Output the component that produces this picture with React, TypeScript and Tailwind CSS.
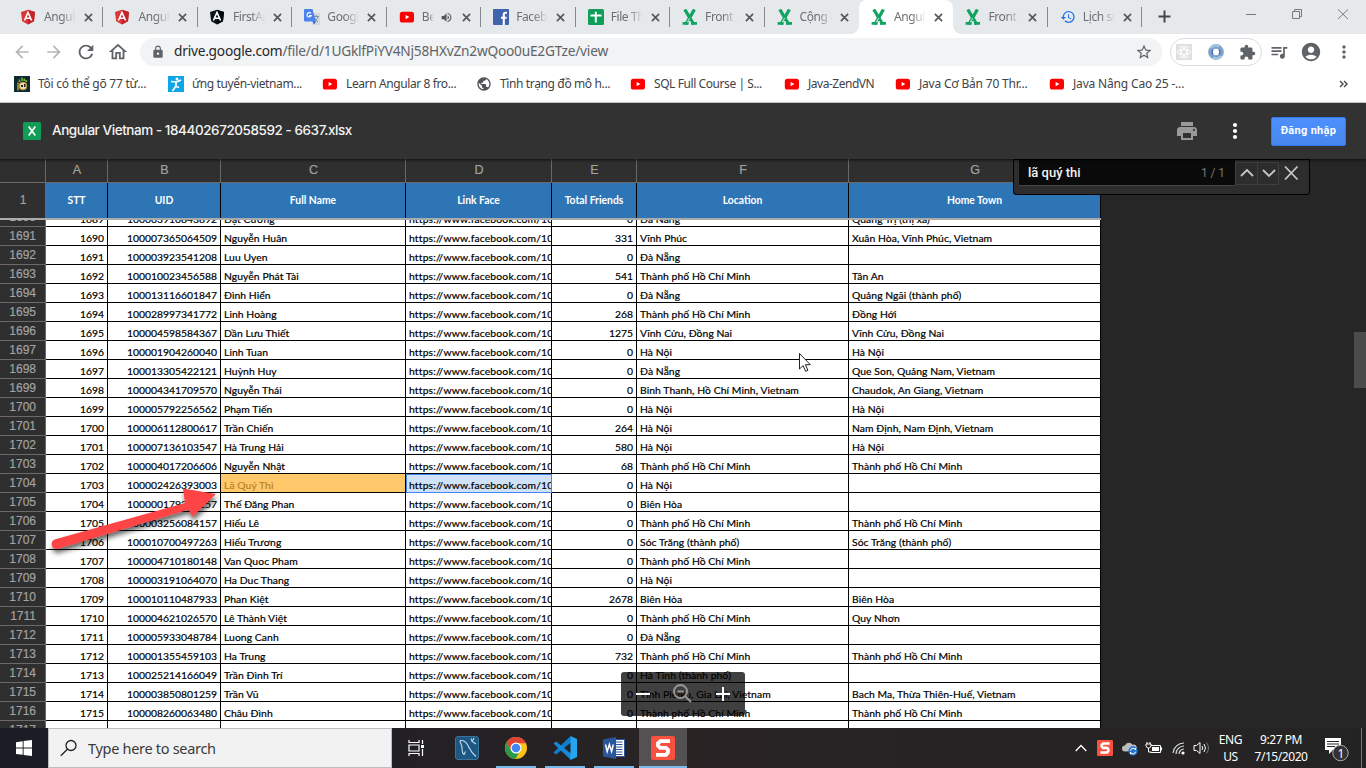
import React from "react";
import {
  MdArrowBack, MdArrowForward, MdRefresh, MdOutlineHome, MdLock, MdStarBorder, MdExtension,
  MdQueueMusic, MdAccountCircle, MdMoreVert, MdPrint, MdVolumeUp, MdHistory, MdPublic,
} from "react-icons/md";

const Angular = ({ dark }: { dark?: boolean }) => (
  <svg width="16" height="16" viewBox="0 0 16 16">
    <path d="M7 .8 14 3l-1 9.200L7 15.600 1.200 12.200 0 3z" fill={dark ? "#0c131b" : "#dd3436"} />
    <path d="M7 .8 14 3l-1 9.200L7 15.600z" fill={dark ? "#02070d" : "#c3232b"} />
    <path d="M3.400 11.500 7 3.400l3.600 8.100M5 9.200h4" fill="none" stroke="#fff" strokeWidth="1.600" />
  </svg>
);
const YouTube = () => (
  <svg width="16" height="16" viewBox="0 0 16 16">
    <rect x=".8" y="2.800" width="14.200" height="10.700" rx="2.600" fill="#f00" />
    <path d="M6.600 5.900v4.400l3.800-2.200z" fill="#fff" />
  </svg>
);
const Translate = () => (
  <svg width="16" height="16" viewBox="0 0 16 16">
    <path d="M6 4h10v12H9z" fill="#d5d8dc" />
    <path d="M9 7.500h6M12 6v1.500M13.800 8c-.5 2-2 3.500-3.500 4.500M10.500 9c1 2 2 3 3.500 3.800" stroke="#7c93a8" fill="none" />
    <path d="M1 0h7.500l3.500 12.500H1a1 1 0 0 1-1-1V1a1 1 0 0 1 1-1z" fill="#4a83ee" />
    <path d="M7 4.500A2.200 2.200 0 1 0 7.300 6.500H5" stroke="#fff" fill="none" strokeWidth="1.100" />
    <path d="M8.500 12.500H12L10 15.500z" fill="#2d5ec4" />
  </svg>
);
const Facebook = () => (
  <svg width="16" height="16" viewBox="0 0 16 16">
    <rect width="16" height="16" rx="1" fill="#4063b0" />
    <path d="M14 3.800h-1.500c-1.400 0-1.700.8-1.700 1.800V16M8 8.800h5.600" stroke="#fff" strokeWidth="2.100" fill="none" />
  </svg>
);
const SheetPlus = () => (
  <svg width="16" height="16" viewBox="0 0 16 16">
    <rect width="16" height="16" rx="1.500" fill="#0f9d58" />
    <path d="M2.500 6.500h11M7.800 2.800v10.700" stroke="#fff" strokeWidth="1.900" />
  </svg>
);
const ExcelX = () => (
  <svg width="16" height="16" viewBox="0 0 16 16">
    <path d="M2.800.5 11.800 15.500M12.400.5 3.800 15.500" stroke="#14a462" strokeWidth="3.300" fill="none" />
    <path d="M.6 14.400h6M9 14.400h6" stroke="#14a462" strokeWidth="2.800" />
    <path d="M7.600 9.200 5.500 12.800h3.500" stroke="#e5f4ec" strokeWidth=".9" fill="none" />
  </svg>
);
const Cross = () => (
  <svg className="shrink-0" width="9" height="9" viewBox="0 0 9 9"><path d="m.9.9 7.200 7.200M8.100.9.9 8.100" stroke="#55585c" strokeWidth="1.700" /></svg>
);

const tabs: { icon: React.ReactNode; label: string; active?: boolean; sound?: boolean }[] = [
  { icon: <Angular />, label: "Angular" },
  { icon: <Angular />, label: "Angular" },
  { icon: <Angular dark />, label: "FirstApp" },
  { icon: <Translate />, label: "Google" },
  { icon: <YouTube />, label: "Beat", sound: true },
  { icon: <Facebook />, label: "Facebook" },
  { icon: <SheetPlus />, label: "File Thu" },
  { icon: <ExcelX />, label: "Front e" },
  { icon: <ExcelX />, label: "Cộng đ" },
  { icon: <ExcelX />, label: "Angular", active: true },
  { icon: <ExcelX />, label: "Front e" },
  { icon: <MdHistory className="size-4 text-[#1a73e8]" />, label: "Lịch sử" },
];

function TabStrip() {
  return (
    <div className="flex h-[34px] bg-[#e5e9ec] pl-[9px] text-[#6b6e72]">
      {tabs.map((t, i) => (
        <div key={i} className={"relative flex h-[34px] w-[94.450px] shrink-0 items-center pl-[12px] " + (t.active ? "rounded-t-[8px] bg-white" : "")}>
          {t.active && (
            <>
              <span className="absolute bottom-0 -left-2 size-2 bg-[radial-gradient(circle_at_0_0,transparent_7.5px,white_8px)]" />
              <span className="absolute -right-2 bottom-0 size-2 bg-[radial-gradient(circle_at_100%_0,transparent_7.5px,white_8px)]" />
            </>
          )}
          <span className="flex size-4 shrink-0">{t.icon}</span>
          <span className={"ml-[7px] overflow-hidden text-[12px] leading-4 tracking-[-0.4px] whitespace-nowrap [mask-image:linear-gradient(to_right,#000_55%,transparent)] " + (t.sound ? "w-[12px]" : "w-[32px]")}>{t.label}</span>
          {t.sound && <MdVolumeUp className="ml-[6px] size-[13px] shrink-0 text-[#555]" />}
          <span className={"flex " + (t.sound ? "ml-[9px]" : "ml-[8px]")}><Cross /></span>
          {!t.active && i !== 8 && <span className="absolute top-[7px] right-0 h-5 w-px bg-[#85888c]" />}
        </div>
      ))}
      <svg className="mt-[10px] ml-[16px]" width="13" height="13" viewBox="0 0 13 13"><path d="M6.500.5v12M.5 6.500h12" stroke="#45484c" strokeWidth="2" /></svg>
      <svg className="ml-auto" width="130" height="34" viewBox="0 0 130 34" fill="none" stroke="#777a7d">
        <path d="M10 14.500h10M56.500 11.500h7v7h-7zM58.500 11V9.500h7v7H64M102 9.500l10 9.500M112 9.500 102 19" />
      </svg>
    </div>
  );
}

function Toolbar() {
  return (
    <div className="flex h-[36px] items-center bg-white text-[#5f6368]">
      <MdArrowBack className="ml-[12px] size-5 text-[#b4b6b8]" />
      <MdArrowForward className="ml-[12px] size-5 text-[#b4b6b8]" />
      <MdRefresh className="ml-[11px] size-[22px]" />
      <MdOutlineHome className="ml-[10px] size-[22px]" />
      <div className="ml-[11px] flex h-[28px] w-[1022px] items-center rounded-full bg-[#f1f3f4]">
        <MdLock className="ml-[11px] size-[14px]" />
        <span className="-mt-px ml-[9px] text-[13.700px] tracking-[-0.22px] whitespace-nowrap"><span className="text-[#25272a]">drive.google.com</span>/file/d/1UGklfPiYV4Nj58HXvZn2wQoo0uE2GTze/view</span>
        <MdStarBorder className="mr-[9px] ml-auto size-[18px]" />
      </div>
      <div className="ml-[8px] flex h-[28px] w-[92px] items-center rounded-full border border-[#dadce0]">
        <svg className="ml-[5px]" width="16" height="16" viewBox="0 0 16 16" fill="none" stroke="#fff">
          <path d="M0 0h16v16H0z" fill="#dfdfdf" stroke="none" />
          <ellipse cx="8" cy="8" rx="6.500" ry="2.500" /><ellipse cx="8" cy="8" rx="6.500" ry="2.500" transform="rotate(60 8 8)" /><ellipse cx="8" cy="8" rx="6.500" ry="2.500" transform="rotate(120 8 8)" />
        </svg>
        <svg className="ml-[16px]" width="16" height="16" viewBox="0 0 16 16" fill="none">
          <circle cx="8" cy="8" r="5.600" stroke="#7da2cc" strokeWidth="4.600" />
          <path d="M3 4a6 6 0 0 1 8-1.500M13 12a6 6 0 0 1-8 1.500" stroke="#b4cbe4" strokeWidth="2" />
          <path d="M11 5.500a4 4 0 0 1 0 5M5 10.500a4 4 0 0 1 0-5" stroke="#426fa8" strokeWidth="1.200" />
        </svg>
        <MdExtension className="ml-[15px] size-[17px]" />
      </div>
      <MdQueueMusic className="ml-[7px] size-[20px]" />
      <MdAccountCircle className="ml-[11px] size-[22px]" />
      <MdMoreVert className="ml-[12px] size-[20px]" />
    </div>
  );
}

const BirdMark = () => (
  <svg width="16" height="16" viewBox="0 0 16 16">
    <path d="M0 0h16v16H0z" fill="#0e2932" />
    <path d="M5.500 6V3.500M8 5V1.500M10.300 5V2.500M12.300 6V4" stroke="#7fb52f" strokeWidth="1.600" />
    <circle cx="9" cy="10" r="3.900" fill="#eadbb0" stroke="#ba8b27" />
    <path d="M7 9h2v2H7zM10 8h1.500v3H10z" fill="#222" /><path d="M4 6.500v8" stroke="#c19736" strokeWidth="1.500" />
  </svg>
);
const RunnerMark = () => (
  <svg width="16" height="16" viewBox="0 0 16 16">
    <path d="M0 0h16v16H0z" fill="#0ea5e9" />
    <circle cx="9" cy="3" r="1.500" fill="#fff" />
    <path d="M3 5.500 8.500 6l4.500-2M8 6v4.500l3 1M8 10l-3.500 5" stroke="#fff" strokeWidth="1.700" fill="none" />
  </svg>
);

const bookmarks: [React.ReactNode, string, string][] = [
  [<BirdMark />, "Tôi có thể gõ 77 từ...", "w-[154px] tracking-[-0.25px]"],
  [<RunnerMark />, "ứng tuyển-vietnam...", "w-[154px] tracking-[-0.37px]"],
  [<YouTube />, "Learn Angular 8 fro...", "w-[154px] tracking-[-0.39px]"],
  [<MdPublic className="size-4 text-[#505357]" />, "Tình trạng đồ mô h...", "w-[154px] tracking-[-0.37px]"],
  [<YouTube />, "SQL Full Course | S...", "w-[154px] tracking-[-0.42px]"],
  [<YouTube />, "Java-ZendVN", "w-[111px] tracking-[-0.48px]"],
  [<YouTube />, "Java Cơ Bản 70 Thr...", "w-[154px] tracking-[-0.2px]"],
  [<YouTube />, "Java Nâng Cao 25 -...", "w-[154px] tracking-[-0.17px]"],
];

function Bookmarks() {
  return (
    <div className="flex h-[33px] items-center border-b border-[#dadce0] bg-white pb-[5px] pl-[14px] text-[12px] text-[#3f4246]">
      {bookmarks.map(([icon, label, w]) => (
        <div key={label} className={"flex shrink-0 items-center " + w}>
          <span className="flex size-4">{icon}</span>
          <span className="ml-[8px] whitespace-nowrap">{label}</span>
        </div>
      ))}
      <svg className="mr-[18px] ml-auto" width="9" height="8" viewBox="0 0 9 8" fill="none" stroke="#45484c" strokeWidth="1.400"><path d="M1 1l3 3-3 3M5 1l3 3-3 3" /></svg>
    </div>
  );
}

function FileHeader() {
  return (
    <div className="relative z-20 flex h-[56px] items-center bg-[#323232] pl-[23px] shadow-[0_1px_3px_rgba(0,0,0,0.7)]">
      <svg width="18" height="18" viewBox="0 0 18 18"><rect width="18" height="18" rx="1.500" fill="#0f9d58" /><path d="m5.700 4.500 6.600 9M12.300 4.500l-6.600 9" stroke="#fff" strokeWidth="1.700" /></svg>
      <span className="-mt-[2px] ml-[11px] font-[Inter] text-[13.500px] font-medium tracking-[-0.44px] whitespace-nowrap text-[#f4f4f4]">Angular Vietnam - 184402672058592 - 6637.xlsx</span>
      <MdPrint className="ml-auto size-[24px] text-[#999]" />
      <svg className="ml-[33px]" width="6" height="18" viewBox="0 0 6 18" fill="#fff"><circle cx="3" cy="3" r="2.100" /><circle cx="3" cy="9" r="2.100" /><circle cx="3" cy="15" r="2.100" /></svg>
      <button className="mr-[20px] ml-[33px] h-[29px] w-[75px] rounded-[2px] border border-[#3079ed] bg-gradient-to-b from-[#4d90fe] to-[#4787ed] pt-px font-[Roboto] text-[11px] font-bold tracking-[0.3px] whitespace-nowrap text-white">Đăng nhập</button>
    </div>
  );
}

type Row = [number, string, string, number, string, string];
const rows: Row[] = [
  [1689, "100003910843892", "Đạt Cường", 0, "Đà Nẵng", "Quảng Trị (thị xã)"],
  [1690, "100007365064509", "Nguyễn Huân", 331, "Vĩnh Phúc", "Xuân Hòa, Vĩnh Phúc, Vietnam"],
  [1691, "100003923541208", "Luu Uyen", 0, "Đà Nẵng", ""],
  [1692, "100010023456588", "Nguyễn Phát Tài", 541, "Thành phố Hồ Chí Minh", "Tân An"],
  [1693, "100013116601847", "Đình Hiển", 0, "Đà Nẵng", "Quảng Ngãi (thành phố)"],
  [1694, "100028997341772", "Linh Hoàng", 268, "Thành phố Hồ Chí Minh", "Đồng Hới"],
  [1695, "100004598584367", "Dần Lưu Thiết", 1275, "Vĩnh Cửu, Đồng Nai", "Vĩnh Cửu, Đồng Nai"],
  [1696, "100001904260040", "Linh Tuan", 0, "Hà Nội", "Hà Nội"],
  [1697, "100013305422121", "Huỳnh Huy", 0, "Đà Nẵng", "Que Son, Quảng Nam, Vietnam"],
  [1698, "100004341709570", "Nguyễn Thái", 0, "Binh Thanh, Hồ Chí Minh, Vietnam", "Chaudok, An Giang, Vietnam"],
  [1699, "100005792256562", "Phạm Tiến", 0, "Hà Nội", "Hà Nội"],
  [1700, "100006112800617", "Trần Chiến", 264, "Hà Nội", "Nam Định, Nam Định, Vietnam"],
  [1701, "100007136103547", "Hà Trung Hải", 580, "Hà Nội", "Hà Nội"],
  [1702, "100004017206606", "Nguyễn Nhật", 68, "Thành phố Hồ Chí Minh", "Thành phố Hồ Chí Minh"],
  [1703, "100002426393003", "Lã Quý Thi", 0, "Hà Nội", ""],
  [1704, "100000179284157", "Thế Đăng Phan", 0, "Biên Hòa", ""],
  [1705, "100003256084157", "Hiếu Lê", 0, "Thành phố Hồ Chí Minh", "Thành phố Hồ Chí Minh"],
  [1706, "100010700497263", "Hiếu Trương", 0, "Sóc Trăng (thành phố)", "Sóc Trăng (thành phố)"],
  [1707, "100004710180148", "Van Quoc Pham", 0, "Thành phố Hồ Chí Minh", ""],
  [1708, "100003191064070", "Ha Duc Thang", 0, "Hà Nội", ""],
  [1709, "100010110487933", "Phan Kiệt", 2678, "Biên Hòa", "Biên Hòa"],
  [1710, "100004621026570", "Lê Thành Việt", 0, "Thành phố Hồ Chí Minh", "Quy Nhơn"],
  [1711, "100005933048784", "Luong Canh", 0, "Đà Nẵng", ""],
  [1712, "100001355459103", "Ha Trung", 732, "Thành phố Hồ Chí Minh", "Thành phố Hồ Chí Minh"],
  [1713, "100025214166049", "Trần Đình Trí", 0, "Hà Tĩnh (thành phố)", ""],
  [1714, "100003850801259", "Trần Vũ", 0, "Tỉnh Pleiku, Gia Lai, Vietnam", "Bach Ma, Thừa Thiên-Huế, Vietnam"],
  [1715, "100008260063480", "Châu Đình", 0, "Thành phố Hồ Chí Minh", "Thành phố Hồ Chí Minh"],
  [1716, "100004937116205", "Minh Anh", 0, "Hà Nội", "Hà Nội"],
];

const grid = "grid grid-cols-[46px_62px_113px_185px_146px_85px_212px_252px] w-[1101px]";
const cell = "overflow-hidden border-r border-b border-black whitespace-nowrap leading-[14px] pt-[4px] [-webkit-text-stroke:0.2px] ";
const num = " text-right pr-[3px]";
const txt = " pl-[3px] tracking-[0.07px]";

function SheetRow({ r }: { r: Row }) {
  const hit = r[0] === 1703;
  return (
    <div className={grid + " h-[19px] shrink-0 bg-white text-[10.350px] text-black"}>
      <div className="overflow-hidden border-r border-b border-[#6a6a6a] bg-[#2f2f2f] pr-[9px] text-right font-['Liberation_Sans'] text-[12px] leading-[18px] text-[#a2a2a2] [-webkit-text-stroke:0.2px]">{r[0] + 1}</div>
      <div className={cell + num}>{r[0]}</div>
      <div className={cell + num}>{r[1]}</div>
      <div className={cell + txt + (hit ? " bg-[#ffc96b] text-[#b98228]" : "")}>{r[2]}</div>
      <div className={cell + " pl-[3px] tracking-[0.17px] " + (hit ? " !border-[#4285f4] bg-[#d0e2f8] shadow-[inset_1px_1px_0_#4285f4]" : "")}>https://www.facebook.com/{r[1]}</div>
      <div className={cell + num}>{r[3]}</div>
      <div className={cell + txt}>{r[4]}</div>
      <div className={cell + txt}>{r[5]}</div>
    </div>
  );
}

function Sheet() {
  return (
    <div className="relative flex h-[569px] flex-col overflow-hidden bg-[#262626] font-[Lato,'Noto_Sans',sans-serif]">
      <div className={grid + " h-[24px] shrink-0 bg-[#2f2f2f] text-center font-['Liberation_Sans'] text-[12.500px] leading-[22px] text-[#a2a2a2] [-webkit-text-stroke:0.2px]"}>
        {["", "A", "B", "C", "D", "E", "F", "G"].map((h) => <div key={h} className="border-r border-b border-[#6a6a6a] pl-px">{h}</div>)}
      </div>
      <div className={grid + " h-[35px] shrink-0 bg-[#2e75b6] text-center text-[10.350px] leading-[35px] font-bold text-white"}>
        <div className="border-r border-[#6a6a6a] bg-[#2f2f2f] pl-px font-['Liberation_Sans'] text-[12px] font-normal text-[#a2a2a2] [-webkit-text-stroke:0.2px]">1</div>
        {["STT", "UID", "Full Name", "Link Face", "Total Friends", "Location", "Home Town"].map((h) => <div key={h} className="border-r border-black">{h}</div>)}
      </div>
      <div className="h-[2px] w-[1101px] shrink-0 bg-[#ababab]" />
      <div className="flex h-[508px] flex-col justify-start overflow-hidden">
        <div className="-mt-[12px] flex flex-col">{rows.map((r) => <SheetRow key={r[0]} r={r} />)}</div>
      </div>

      <div className="absolute top-0 left-[1013px] flex h-[36px] w-[297px] rounded-b-[3px] border border-black bg-[#2d2d2d] pl-[5px] font-[Roboto] text-[#f2f2f2]">
        <div className="flex h-[26px] w-[216px] items-center border-b border-[#454545] bg-[#0a0a0a] pr-[10px] pl-[9px]">
          <span className="text-[13px] font-medium">lã quý thi</span>
          <span className="ml-auto text-[12px] tracking-[-0.1px] text-[#777]">1 / 1</span>
        </div>
        <svg width="70" height="28" viewBox="0 0 70 28" fill="none" stroke="#404040">
          <path d="M.5 2.500h43v22H.5zM22.500 2.500v22" />
          <path d="m6 16 6-6 6 6M28 10l6 6 6-6M50 6.500l12.500 13M62.500 6.500 50 19.500" stroke="#c8c8c8" strokeWidth="1.800" />
        </svg>
      </div>
      <div className="absolute top-[173px] right-0 h-[56px] w-[12px] bg-[#4b4b4b]" />

      <svg className="absolute top-[316px] left-[40px]" width="190" height="90" viewBox="0 0 190 90">
        <defs><filter id="soft" x="-10%" y="-20%" width="120%" height="150%"><feDropShadow dx="1" dy="4" stdDeviation="2.500" floodColor="#000" floodOpacity=".6" /></filter></defs>
        <path d="M14.500 64.500 145 28 143 13.500 176 19 152 42 149 34.500 17 74A5 5 0 0 1 14.500 64.500z" fill="#fd4444" filter="url(#soft)" />
      </svg>
      <svg className="absolute top-[194px] left-[799px]" width="13" height="20" viewBox="0 0 13 20">
        <path d="M.5.5v15.500l3.600-3.400 2.500 5.700 2.300-1-2.500-5.600h4.900z" fill="#fff" stroke="#222" />
      </svg>
      <div className="absolute top-[513px] left-[621px] h-[44px] w-[124px] rounded-[3px] bg-black/75">
        <svg width="124" height="43" viewBox="0 0 124 43" fill="none" stroke="#fff" strokeWidth="2">
          <path d="M15 22h14M95 22h14M102 15v14" />
          <g stroke="#969696"><circle cx="59.500" cy="19.500" r="6.500" /><path d="m64 24 6 6M56.500 19.500h6" /></g>
        </svg>
      </div>
    </div>
  );
}

const SnagMark = () => (
  <svg className="size-full" viewBox="0 0 24 24"><rect width="24" height="24" rx="2" fill="#f9513f" /><path d="M19 5.200H9.500L7 7.200v2.600L9 11.800h6l2 2v2.800l-2 2.200H5" fill="none" stroke="#fff" strokeWidth="3.800" /></svg>
);

const apps: { icon: React.ReactNode; running?: boolean; active?: boolean }[] = [
  { icon: <svg width="24" height="24" viewBox="0 0 24 24"><rect x=".5" y=".5" width="23" height="23" rx="2.500" fill="#1d5783" stroke="#3a759e" /><path d="M5 4.500c4-.5 6 1 8 5s3 7 8 11M5 4.500c0 3 2 4 2 7s0 6 2 7l1.500-3M16 2.500l1 3 4 2.500M19 2l-1.500 3" fill="none" stroke="#c6dceb" strokeWidth="1.100" /></svg> },
  { icon: <svg width="24" height="24" viewBox="0 0 24 24"><circle cx="12" cy="12" r="11" fill="#fbc116" /><path d="M2.500 6.500A11 11 0 0 1 22 7.200H12l-5 7.300z" fill="#de4436" /><path d="M2.500 6.500A11 11 0 0 0 11.500 23l4.500-8.500L7 14.500z" fill="#279b4c" /><circle cx="12" cy="12" r="5.500" fill="#fff" /><circle cx="12" cy="12" r="4.300" fill="#4285f4" /></svg>, running: true },
  { icon: <svg width="24" height="24" viewBox="0 0 24 24"><path d="M18 6.500 3 18.500.5 16.500 17.500 0z" fill="#0a7fce" /><path d="M.5 7.500 3 5.500l15 12V24z" fill="#148bd8" /><path d="M17.500 0 24 3v18l-6.500 3z" fill="#25a5ef" /></svg>, running: true },
  { icon: <svg width="24" height="24" viewBox="0 0 24 24"><path d="M13 3.500h9.500v17H13z" fill="#fff" stroke="#2b579a" /><path d="M14 6h6.500M14 8.500h6.500M14 11h6.500M14 13.500h6.500M14 16h6.500M14 18.500h6.500" stroke="#2b579a" /><path d="M1 3.500 14 1v22L1 20.500z" fill="#2b579a" /><path d="m3.500 8.500 1.700 7 2.200-7 2.200 7 1.700-7" fill="none" stroke="#fff" strokeWidth="1.500" /></svg>, running: true },
  { icon: <span className="size-6"><SnagMark /></span>, running: true, active: true },
];

function Taskbar() {
  return (
    <div className="flex h-[40px] bg-gradient-to-r from-[#1a1d24] via-[#292324] to-[#242324] text-white">
      <div className="flex w-[48px] items-center justify-center">
        <svg width="16" height="16" viewBox="0 0 16 16" fill="#fff"><path d="M0 2.200 6.700 1.300v6.300H0zM7.600 1.100 16 0v7.600H7.600zM0 8.500h6.700v6.300L0 13.900zM7.600 8.500H16V16l-8.400-1.100z" /></svg>
      </div>
      <div className="flex w-[344px] items-center border border-[#bdbdbd] bg-[#f2f2f2] pl-[11px]">
        <svg width="18" height="18" viewBox="0 0 18 18" fill="none" stroke="#222" strokeWidth="1.300"><circle cx="11" cy="6.500" r="5" /><path d="M7.400 10.200.8 16.800" /></svg>
        <span className="mt-[2px] ml-[10px] text-[14.500px] tracking-[-0.3px] text-[#3a3a3a]">Type here to search</span>
      </div>
      <div className="flex w-[48px] items-center justify-center">
        <svg width="17" height="16" viewBox="0 0 17 16" fill="none" stroke="#fff" strokeWidth="1.200"><path d="M1 0v2.500h10V0M1 16v-2.500h10V16M1 5h10v6H1zM14.500 0v4M14.500 9v7" /><path d="M13 5h3v3h-3z" fill="#fff" stroke="none" /></svg>
      </div>
      <div className="flex gap-px pl-[3px]">
        {apps.map((a, i) => (
          <div key={i} className={"relative flex w-[48px] items-center justify-center " + (a.active ? "bg-[#555152]" : "")}>
            {a.icon}
            {a.running && <span className={"absolute bottom-0 h-[2px] bg-[#76b9ed] " + (a.active ? "inset-x-0" : "inset-x-[4px]")} />}
          </div>
        ))}
      </div>
      <div className="ml-auto flex items-center">
        <svg width="12" height="8" viewBox="0 0 12 8" fill="none" stroke="#fff" strokeWidth="1.300"><path d="m.7 7 5.300-5.500L11.300 7" /></svg>
        <span className="ml-[10px] size-4"><SnagMark /></span>
        <svg className="ml-[8px]" width="17" height="16" viewBox="0 0 17 16"><path d="M4 11.500a3 3 0 0 1 0-6 4.200 4.200 0 0 1 7.500-.8A3.400 3.400 0 0 1 14 11z" fill="#bcbcbc" /><circle cx="12" cy="11" r="4.700" fill="#2376cf" /><path d="M9.500 10.500a2.600 2.600 0 0 1 5-.5V8M14.600 11.700a2.600 2.600 0 0 1-5 .5v2" stroke="#fff" fill="none" /></svg>
        <svg className="ml-[7px]" width="17" height="14" viewBox="0 0 17 14" fill="none" stroke="#fff"><path d="M6 4.500h9.500v7h-10M15.500 6.500h1v3M1 3h5v2L4.500 7h-2L1 5zM2 1v2M5 1v2M3.500 7v4h3" /><path d="M7 6h7v4H7z" fill="#fff" stroke="none" /></svg>
        <svg className="ml-[10px]" width="13" height="14" viewBox="0 0 13 14" fill="none" stroke="#ddd" strokeWidth="1.200"><path d="M1 12A11 11 0 0 1 12 2M4 13a8 8 0 0 1 8-8M7 13a5 5 0 0 1 5-5" /><circle cx="11" cy="12" r="1.600" fill="#fff" stroke="none" /></svg>
        <svg className="ml-[8px]" width="17" height="16" viewBox="0 0 17 16" fill="none" stroke="#fff"><path d="M1 5.500h2.500L7 2.500v11l-3.500-3H1zM9 6q1.500 2 0 4M11 4q3 4 0 8" /><path d="M13.500 2.500q4 5.500 0 11" stroke="#777" /></svg>
        <div className="ml-[8px] w-[25px] text-center text-[12px] leading-[17px] tracking-[-0.35px]">ENG<br />US</div>
        <div className="ml-[10px] w-[56px] text-center text-[12px] leading-[17px] tracking-[-0.45px] whitespace-nowrap">9:27 PM<br />7/15/2020</div>
        <svg className="mt-[4px] ml-[15px]" width="26" height="26" viewBox="0 0 26 26"><path d="M1 1h16v12H9l-4 4v-4H1z" fill="#fff" /><path d="M3 4.500h12M3 7h12M3 9.500h8" stroke="#292526" /><circle cx="16.500" cy="16" r="7.700" fill="#343132" stroke="#aaa" /><text x="13.500" y="20.500" fill="#fff" fontSize="12" fontFamily="Noto Sans">1</text></svg>
        <div className="ml-[11px] h-[40px] w-px bg-[#777]" /><div className="w-[4px]" />
      </div>
    </div>
  );
}

export default function App() {
  return (
    <div className="flex h-[768px] w-[1366px] flex-col overflow-hidden bg-[#262626] font-['Noto_Sans','Open_Sans',sans-serif]">
      <TabStrip />
      <Toolbar />
      <Bookmarks />
      <FileHeader />
      <Sheet />
      <Taskbar />
    </div>
  );
}
